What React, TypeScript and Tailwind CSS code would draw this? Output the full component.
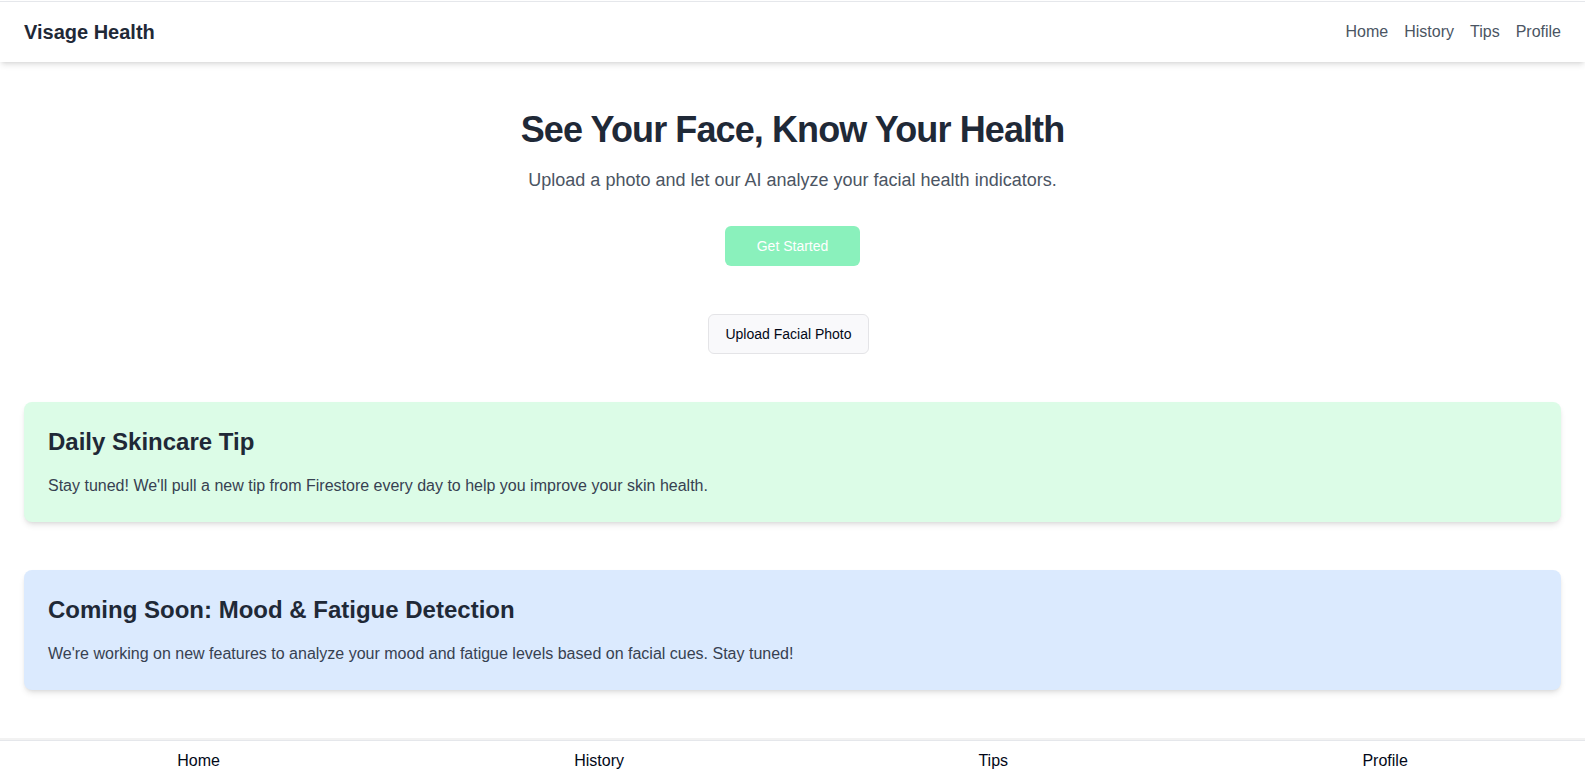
const links = ["Home", "History", "Tips", "Profile"];

function Card({ title, text, tone }: { title: string; text: string; tone: string }) {
  return (
    <section className={`rounded-lg p-6 shadow-md ${tone}`}>
      <h2 className="mb-4 text-2xl font-bold text-[#1f2937]">{title}</h2>
      <p className="text-[#374151]">{text}</p>
    </section>
  );
}

export default function App() {
  return (
    <div className="bg-white pt-px font-['Liberation_Sans',Arial,sans-serif] text-[#020817]">
      <header className="flex items-center justify-between border-t border-gray-200 px-6 py-4 shadow-md">
        <div className="text-xl font-bold text-[#1f2937]">Visage Health</div>
        <nav aria-label="Main" className="flex gap-4">
          {links.map((l) => (
            <a key={l} href={`#${l.toLowerCase()}`} className="text-[#4b5563] hover:text-gray-800">
              {l}
            </a>
          ))}
        </nav>
      </header>

      <main className="pb-12">
        <section className="flex flex-col items-center pt-12 text-center">
          <h1 className="mb-4 text-4xl font-bold tracking-tight text-[#1f2937]">See Your Face, Know Your Health</h1>
          <p className="mb-8 text-lg text-[#4b5563]">Upload a photo and let our AI analyze your facial health indicators.</p>
          <button type="button" disabled className="h-10 rounded-md bg-[#8af1bc] px-8 text-sm text-white">
            Get Started
          </button>
        </section>
        <section className="my-12 flex justify-center pr-2">
          <button type="button" className="h-10 rounded-md border border-[#e4e4e7] bg-[#f9f9fb] px-4 text-sm">
            Upload Facial Photo
          </button>
        </section>
        <div className="flex flex-col gap-12 px-6">
          <Card
            tone="bg-[#dcfce7]"
            title="Daily Skincare Tip"
            text="Stay tuned! We'll pull a new tip from Firestore every day to help you improve your skin health."
          />
          <Card
            tone="bg-[#dbeafe]"
            title="Coming Soon: Mood & Fatigue Detection"
            text="We're working on new features to analyze your mood and fatigue levels based on facial cues. Stay tuned!"
          />
        </div>
      </main>

      <div className="border-t-2 border-[#f2f2f2]">
        <nav aria-label="Bottom" className="flex justify-around border-t border-gray-200 pt-2 pb-0.5">
          {links.map((l) => (
            <a key={l} href={`#${l.toLowerCase()}`}>
              {l}
            </a>
          ))}
        </nav>
      </div>
    </div>
  );
}
